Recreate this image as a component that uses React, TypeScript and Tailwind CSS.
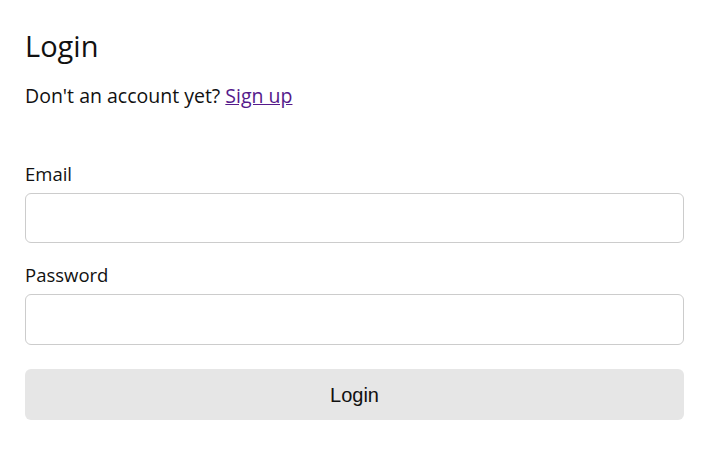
export default function App() {
  return (
    <div className="min-h-screen bg-white pl-[25px] pr-[21px] pt-[26px] text-[#111] font-['Open_Sans','Noto_Sans',sans-serif]">
      <h1 className="text-[29px] leading-[40px] font-normal">Login</h1>
      <p className="mt-[16px] text-[19.5px] leading-[28px]">
        Don't an account yet?{' '}
        <a href="#" className="text-[#551a8b] underline">Sign up</a>
      </p>

      <form className="mt-[51px] flex flex-col" onSubmit={e => e.preventDefault()}>
        <label className="text-[18.5px] leading-[26px]">Email</label>
        <input
          type="email"
          className="mt-[6px] h-[50px] rounded-md border border-[#cccccc] px-3 outline-none"
        />

        <label className="mt-[19px] text-[18.5px] leading-[26px]">Password</label>
        <input
          type="password"
          className="mt-[6px] h-[51px] rounded-md border border-[#cccccc] px-3 outline-none"
        />

        <button
          type="submit"
          className="mt-[24px] h-[51px] rounded-md bg-[#e6e6e6] text-[20px] text-[#111] font-['Liberation_Sans',Arial,sans-serif]"
        >
          Login
        </button>
      </form>
    </div>
  );
}
